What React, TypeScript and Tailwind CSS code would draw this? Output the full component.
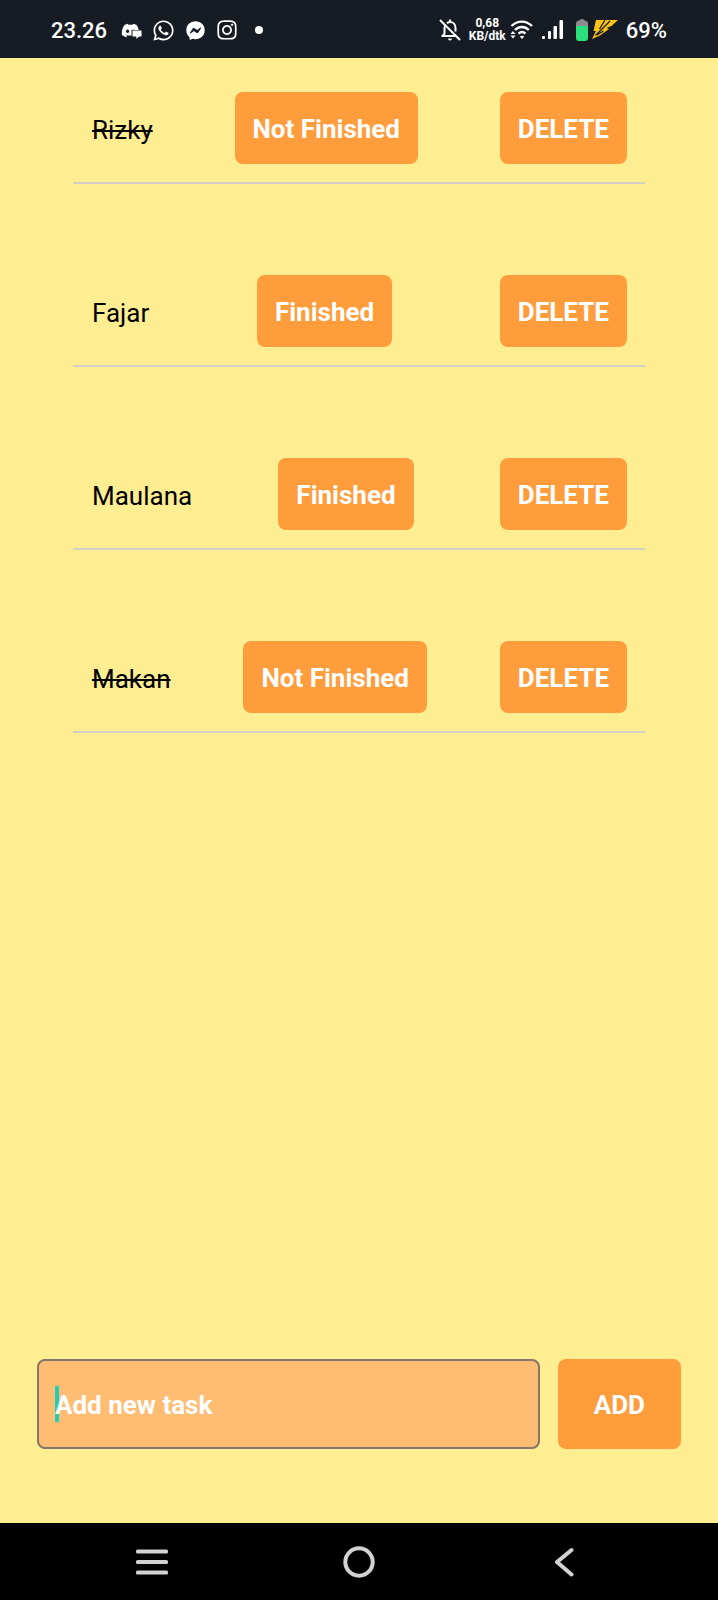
import { useState } from "react";
import { FaDiscord, FaFacebookMessenger, FaInstagram, FaWhatsapp } from "react-icons/fa";

type Task = { id: number; name: string; done: boolean };

const initialTasks: Task[] = [
  { id: 1, name: "Rizky", done: true },
  { id: 2, name: "Fajar", done: false },
  { id: 3, name: "Maulana", done: false },
  { id: 4, name: "Makan", done: true },
];

function DiscordIcon() {
  return (
    <span className="relative flex w-5 justify-start">
      <FaDiscord size={19} />
      <svg className="absolute -right-px bottom-0" width="11" height="10" viewBox="0 0 11 10" aria-hidden="true">
        <path d="M1 0h9a1 1 0 0 1 1 1v6H8l-3 3V7H1z" fill="currentColor" stroke="#171c24" strokeWidth="1" />
      </svg>
    </span>
  );
}

function BellOffIcon() {
  return (
    <svg width="22" height="22" viewBox="0 0 22 22" fill="none" stroke="currentColor" strokeWidth="2" aria-hidden="true">
      <path d="M3.500 17L5.500 14.500V9c0-1.200.3-2.200.9-3M8 4.200C9 3.400 10 3 11 3c3.200 0 5.500 2.500 5.500 6v3.500" />
      <path d="M2.500 17h14.500M11 .5v2.500M1 1l20 20" />
      <path d="M9 19.500h4a2 2 0 0 1-4 0z" fill="currentColor" stroke="none" />
    </svg>
  );
}

function WifiIcon() {
  return (
    <svg width="24" height="20" viewBox="0 0 24 20" fill="none" stroke="currentColor" strokeWidth="2.400" aria-hidden="true">
      <path d="M1.500 6C7.500.2 16 .2 22 6M5 10c4-4 9.800-4 13.800 0M8.500 13.700c2.200-2 4.900-2 6.900 0" />
      <path d="M12 19l-2.200-2.500q2.200-1.700 4.400 0z" fill="currentColor" stroke="none" />
      <path d="M.5 14L3 11l2.500 3zM.5 15.500L3 18.500l2.500-3z" fill="currentColor" stroke="none" />
    </svg>
  );
}

function SignalIcon() {
  return (
    <svg width="22" height="20" viewBox="0 0 22 20" fill="currentColor" aria-hidden="true">
      <rect x="0" y="16" width="3" height="3" rx="1" />
      <rect x="6" y="11" width="3" height="8" rx="1" />
      <rect x="11.500" y="6" width="3.500" height="13" rx="1" />
      <rect x="17.500" y="0" width="3.500" height="19" rx="1" />
    </svg>
  );
}

function BatteryIcon() {
  return (
    <svg width="12" height="22" viewBox="0 0 12 22" aria-hidden="true">
      <path d="M0 8V4.500Q0 2 3 1.500Q4 0 6 0t3 1.500Q12 2 12 4.500V8z" fill="#8b8b90" />
      <path d="M0 7h12v12q0 3-3 3H3q-3 0-3-3z" fill="#2be07c" />
    </svg>
  );
}

function ChargeIcon() {
  return (
    <svg width="26" height="20" viewBox="0 0 26 20" aria-hidden="true">
      <path d="M4 0H26L19.500 6L14.500 8L17 9L8 15.500L0 19L4 11H1.500z" fill="#fcc419" />
      <path d="M13 0L7.500 9M18 1L3.500 15.500M11.500 11L5 15" stroke="#171c24" strokeWidth="1.300" fill="none" />
    </svg>
  );
}

const orangeButton =
  "rounded-lg bg-[#ff9d3c] pt-[2px] text-[26px] leading-[30px] font-bold text-white cursor-pointer whitespace-nowrap";

export default function App() {
  const [tasks, setTasks] = useState(initialTasks);
  const [draft, setDraft] = useState("");

  const addTask = () => {
    if (!draft.trim()) return;
    setTasks([...tasks, { id: Date.now(), name: draft.trim(), done: false }]);
    setDraft("");
  };
  const toggle = (id: number) =>
    setTasks(tasks.map((t) => (t.id === id ? { ...t, done: !t.done } : t)));
  const remove = (id: number) => setTasks(tasks.filter((t) => t.id !== id));

  return (
    <div className="flex min-h-screen flex-col bg-[#ffed91] font-[Roboto,sans-serif] text-black">
      <header className="flex h-[58px] items-center justify-between bg-[#171c24] px-[51px] pt-[2px] text-white">
        <div className="flex items-center">
          <span className="mr-2 pt-[2px] text-[22px] leading-7 font-medium">23.26</span>
          <span className="flex w-8 justify-center"><DiscordIcon /></span>
          <span className="flex w-8 justify-center"><FaWhatsapp size={23} /></span>
          <span className="flex w-8 justify-center"><FaFacebookMessenger size={19} /></span>
          <span className="flex w-8 justify-center"><FaInstagram size={22} /></span>
          <span className="flex w-8 justify-center"><span className="size-2 rounded-full bg-white" /></span>
        </div>
        <div className="flex items-center">
          <BellOffIcon />
          <span className="mr-1 ml-2 text-center text-xs leading-[13px] font-bold">
            0,68
            <br />
            KB/dtk
          </span>
          <WifiIcon />
          <span className="ml-2"><SignalIcon /></span>
          <span className="mr-1 ml-3"><BatteryIcon /></span>
          <ChargeIcon />
          <span className="ml-2 pt-[2px] text-[22px] leading-7 font-medium">69%</span>
        </div>
      </header>

      <main className="flex flex-1 flex-col justify-between pt-4 pb-[74px]">
        <ul className="flex flex-col gap-[73px] px-[73px]">
          {tasks.map((task) => (
            <li
              key={task.id}
              className="flex items-center justify-between border-b-2 border-[#d3d0c6] py-[18px] pr-[18px] pl-[19px]"
            >
              <span className={task.done ? "pt-[3px] text-[26px] leading-9 line-through" : "pt-[3px] text-[26px] leading-9"}>
                {task.name}
              </span>
              <button type="button" onClick={() => toggle(task.id)} className={`${orangeButton} h-[72px] px-[18px]`}>
                {task.done ? "Not Finished" : "Finished"}
              </button>
              <button type="button" onClick={() => remove(task.id)} className={`${orangeButton} h-[72px] px-[18px]`}>
                DELETE
              </button>
            </li>
          ))}
        </ul>

        <form
          className="flex gap-[18px] px-[37px]"
          onSubmit={(e) => {
            e.preventDefault();
            addTask();
          }}
        >
          <div className="relative flex min-w-0 flex-1 rounded-[9px] bg-[#ffbc73]">
            <span className="absolute top-[27px] left-[18px] h-9 w-1 bg-[#1fd1b2]" />
            <input
              aria-label="Add new task"
              value={draft}
              onChange={(e) => setDraft(e.target.value)}
              placeholder="Add new task"
              className="relative h-[90px] w-full min-w-0 rounded-lg border-2 border-[#85756a] bg-transparent px-4 pt-[2px] text-[26px] font-bold text-white outline-none placeholder:text-white"
            />
          </div>
          <button type="submit" className={`${orangeButton} h-[90px] px-9`}>
            ADD
          </button>
        </form>
      </main>

      <nav aria-label="System" className="flex h-[77px] items-center bg-black px-[49px] text-[#d2d2d2]">
        <button type="button" aria-label="Recent apps" className="flex flex-1 justify-center">
          <svg width="32" height="26" viewBox="0 0 32 26" fill="currentColor" aria-hidden="true">
            <rect y="0.500" width="32" height="4" rx="1.500" />
            <rect y="11" width="32" height="4" rx="1.500" />
            <rect y="21.500" width="32" height="4" rx="1.500" />
          </svg>
        </button>
        <button type="button" aria-label="Home" className="flex flex-1 justify-center">
          <svg width="32" height="32" viewBox="0 0 32 32" fill="none" stroke="currentColor" strokeWidth="4" aria-hidden="true">
            <circle cx="16" cy="16" r="13.700" />
          </svg>
        </button>
        <button type="button" aria-label="Back" className="flex flex-1 justify-center">
          <svg width="24" height="30" viewBox="0 0 24 30" fill="none" stroke="currentColor" strokeWidth="4" strokeLinecap="round" strokeLinejoin="round" aria-hidden="true">
            <path d="M17.500 3L3 15L17.500 27.500" />
          </svg>
        </button>
      </nav>
    </div>
  );
}
